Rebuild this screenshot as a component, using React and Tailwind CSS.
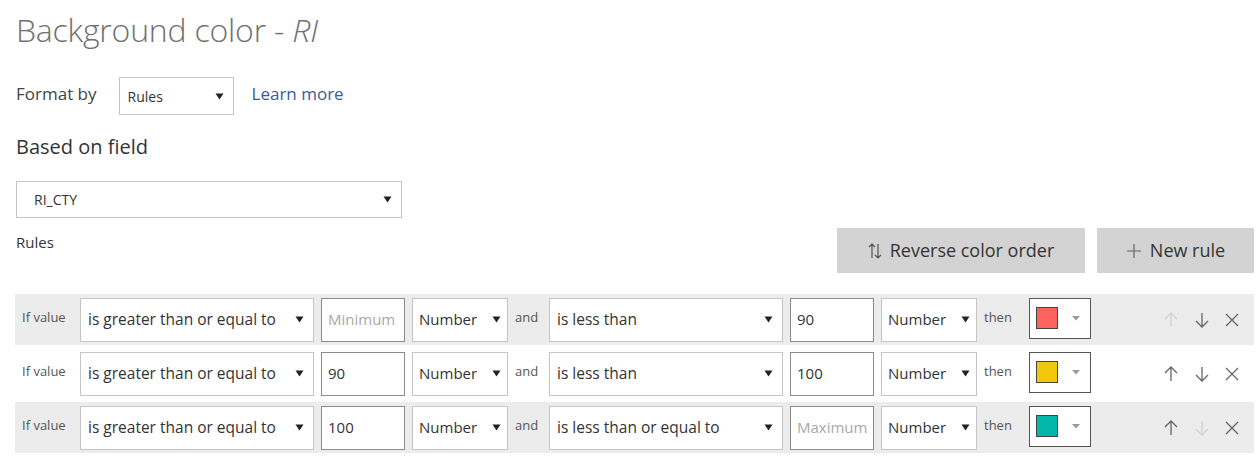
import React from "react"

const font = { fontFamily: '"Open Sans", "Noto Sans", sans-serif' }

const Caret = ({ className = "" }) => (
  <svg width="9" height="7" viewBox="0 0 9 7" className={className}>
    <path d="M0.5 0.5 H8.5 L4.5 6.5 Z" fill="#222" />
  </svg>
)

const Select = ({ value, className = "", textClass = "text-[15px]" }) => (
  <div className={`flex items-center justify-between bg-white border border-[#c6c6c6] ${className}`}>
    <span className={`${textClass} text-[#333] truncate`}>{value}</span>
    <Caret className="shrink-0" />
  </div>
)

const Input = ({ value, placeholder }) => (
  <div className="flex items-center h-[44px] w-[84px] bg-white border border-[#8c8c8c] pl-[6px] overflow-hidden">
    {value ? (
      <span className="text-[15px] text-[#333]">{value}</span>
    ) : (
      <span className="text-[15px] text-[#a8a8a8] whitespace-nowrap">{placeholder}</span>
    )}
  </div>
)

const Arrow = ({ dir, dim }) => (
  <svg width="18" height="18" viewBox="0 0 18 18" fill="none" stroke={dim ? "#d2d2d2" : "#666"} strokeWidth="1.3">
    {dir === "up" ? (
      <path d="M9 16 V2 M3 8 L9 2 L15 8" />
    ) : (
      <path d="M9 2 V16 M3 10 L9 16 L15 10" />
    )}
  </svg>
)

const Close = () => (
  <svg width="16" height="16" viewBox="0 0 16 16" fill="none" stroke="#666" strokeWidth="1.3">
    <path d="M2 2 L14 14 M14 2 L2 14" />
  </svg>
)

const rules = [
  { first: "is greater than or equal to", min: null, minPh: "Minimum", second: "is less than", max: "90", color: "#fd625e", up: false, down: true, bg: "bg-[#ececec]" },
  { first: "is greater than or equal to", min: "90", second: "is less than", max: "100", color: "#f2c80f", up: true, down: true, bg: "bg-white" },
  { first: "is greater than or equal to", min: "100", second: "is less than or equal to", max: null, maxPh: "Maximum", color: "#01b8aa", up: true, down: false, bg: "bg-[#ececec]" },
]

function RuleRow({ r }) {
  return (
    <div className={`flex items-center h-[51px] pl-[7px] pr-[14px] ${r.bg}`}>
      <span className="w-[51px] mr-[7px] text-[13px] text-[#555] -mt-[4px] whitespace-nowrap">If value</span>
      <Select value={r.first} textClass="text-[15.5px]" className="w-[234px] h-[44px] pl-[7px] pr-[9px] mr-[7px]" />
      <div className="mr-[7px]"><Input value={r.min} placeholder={r.minPh} /></div>
      <Select value="Number" className="w-[96px] h-[44px] pl-[6px] pr-[6px] mr-[7px]" />
      <span className="w-[27px] mr-[7px] text-[13px] text-[#555] -mt-[4px]">and</span>
      <Select value={r.second} textClass="text-[15.5px]" className="w-[234px] h-[44px] pl-[7px] pr-[9px] mr-[7px]" />
      <div className="mr-[7px]"><Input value={r.max} placeholder={r.maxPh} /></div>
      <Select value="Number" className="w-[96px] h-[44px] pl-[6px] pr-[6px] mr-[7px]" />
      <span className="w-[33px] mr-[12px] text-[13px] text-[#555] -mt-[4px]">then</span>
      <div className="flex items-center w-[62px] h-[41px] -mt-[3px] bg-white border border-[#555] pl-[6px]">
        <div className="w-[22px] h-[22px] border border-[#444]" style={{ background: r.color }} />
        <svg width="8" height="5" viewBox="0 0 8 5" className="ml-[14px]">
          <path d="M0 0 H8 L4 4.5 Z" fill="#999" />
        </svg>
      </div>
      <div className="ml-auto flex items-center gap-[13px]">
        <Arrow dir="up" dim={!r.up} />
        <Arrow dir="down" dim={!r.down} />
        <Close />
      </div>
    </div>
  )
}

export default function App() {
  return (
    <div className="w-[1260px] h-[459px] bg-white overflow-hidden pl-[15px] pr-[6px]" style={font}>
      {/* Header */}
      <div className="pt-[10px] pl-[1px] text-[32px] font-light text-[#707070] leading-[40px] tracking-[-0.2px]">
        Background color - <span className="italic">RI</span>
      </div>

      {/* Format by */}
      <div className="flex items-center mt-[27px] pl-[1px]">
        <span className="text-[17px] text-[#444] mr-[22px] -mt-[4px]">Format by</span>
        <Select value="Rules" textClass="text-[14px]" className="w-[115px] h-[38px] pl-[8px] pr-[9px] border-[#8f8f8f]" />
        <span className="ml-[18px] text-[17px] text-[#3b5b9a] -mt-[4px]">Learn more</span>
      </div>

      {/* Field */}
      <div className="mt-[18px] pl-[1px] text-[20px] text-[#333] leading-[28px]">Based on field</div>
      <Select value="RI_CTY" textClass="text-[14px]" className="mt-[20px] ml-[1px] w-[386px] h-[37px] pl-[17px] pr-[9px] border-[#8f8f8f]" />

      {/* Rules header */}
      <div className="flex items-start justify-between mt-[11px] pl-[1px] pr-0">
        <span className="text-[15px] text-[#333] mt-[2px]">Rules</span>
        <div className="flex gap-[12px] -mt-[1px]">
          <button className="flex items-center justify-center w-[248px] h-[45px] bg-[#d3d3d3] text-[18px] text-[#333]">
            <svg width="14" height="16" viewBox="0 0 14 16" fill="none" stroke="#555" strokeWidth="1.2" className="mr-[8px]">
              <path d="M4 15 V1 M1 4 L4 1 L7 4" />
              <path d="M10 1 V15 M7 12 L10 15 L13 12" />
            </svg>
            Reverse color order
          </button>
          <button className="flex items-center justify-center w-[157px] h-[45px] bg-[#d3d3d3] text-[18px] text-[#333]">
            <svg width="16" height="16" viewBox="0 0 16 16" fill="none" stroke="#666" strokeWidth="1.2" className="mr-[8px]">
              <path d="M8 1 V15 M1 8 H15" />
            </svg>
            New rule
          </button>
        </div>
      </div>

      {/* Rule rows */}
      <div className="mt-[21px] flex flex-col gap-[3px] w-[1239px]">
        {rules.map((r, i) => (
          <RuleRow key={i} r={r} />
        ))}
      </div>
    </div>
  )
}
